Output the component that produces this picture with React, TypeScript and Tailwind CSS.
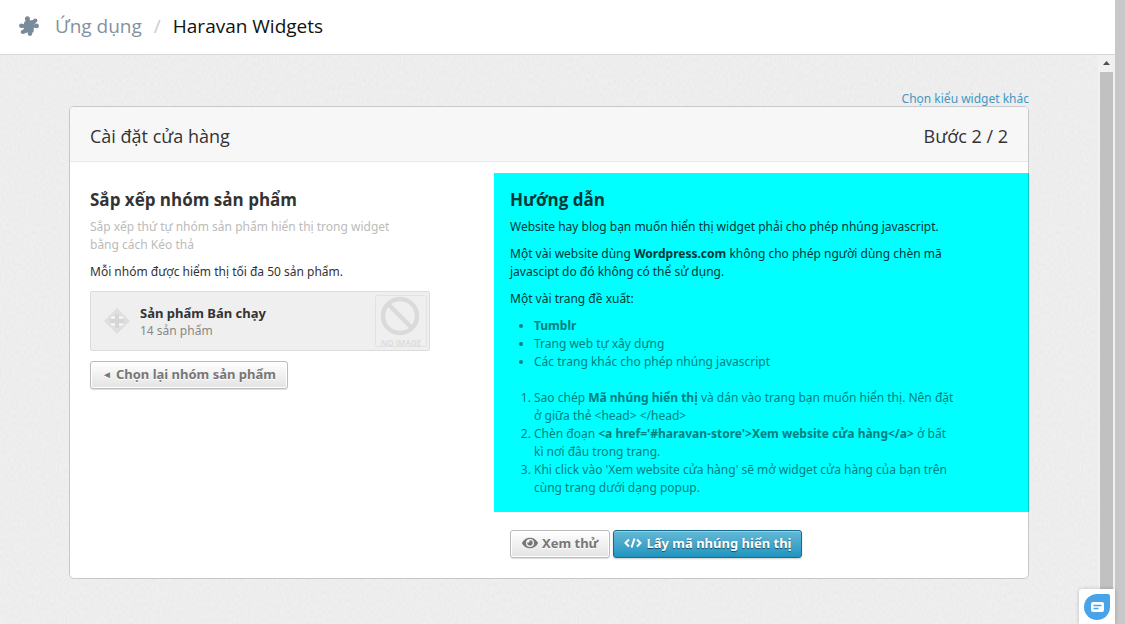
import type { ReactNode } from 'react';
import { FaEye } from 'react-icons/fa';

const SITES = ['Trang web tự xây dựng', 'Các trang khác cho phép nhúng javascript'];

function PuzzleIcon() {
  return (
    <svg viewBox="0 0 20 20" className="size-5 shrink-0" fill="#788b9b" aria-hidden="true">
      <path d="M5.500 5.500L15 3.800l2 3L14.800 9v4l1.200 2.500-3.500 1.500-3-.8L5 17.500l-2.500-2L5 12.500 4.600 9z" />
      <circle cx="8.400" cy="2.800" r="2.500" />
      <path d="M6.800 4h4.200v3H6.500z" />
      <circle cx="16.300" cy="4.600" r="2.100" />
      <circle cx="17.600" cy="9.900" r="2.300" />
      <path d="M13 8.500h4.500v3.200H13z" />
      <circle cx="11" cy="17.600" r="2.300" />
      <circle cx="3.800" cy="16" r="2.100" />
      <circle cx="2.400" cy="9.700" r="2.300" />
      <path d="M2.500 8.200H6v3.600H3z" />
      <circle cx="16" cy="14.800" r="1.600" fill="#fff" />
    </svg>
  );
}

function MoveIcon() {
  return (
    <svg viewBox="0 0 26 26" className="size-[26px] shrink-0" aria-hidden="true">
      <path d="M13 0l13 13-13 13L0 13z" fill="#dfdfdf" />
      <path d="M7 8.500h4v2H7zM15 8.500h4v2h-4zM7 15.500h4v2H7zM15 15.500h4v2h-4z" fill="#fafafa" />
      <path d="M11 6h4v14h-4zM6 11h14v4H6z" fill="#d6d6d6" />
    </svg>
  );
}

function NoImage() {
  return (
    <svg viewBox="0 0 52 52" className="size-[52px]" fontFamily="Open Sans, sans-serif" role="img" aria-label="No image">
      <rect x="0.5" y="0.5" width="51" height="51" rx="2" fill="#efefef" stroke="#e2e2e2" />
      <circle cx="25" cy="21" r="17" fill="none" stroke="#dadada" strokeWidth="4.500" />
      <path d="M13 9l24 24" stroke="#dadada" strokeWidth="4.500" />
      <text x="26" y="51" fontSize="8" fontWeight="600" fill="#dadada" textAnchor="middle">
        NO IMAGE
      </text>
    </svg>
  );
}

// Fine paper grain behind the card
function PaperTexture() {
  return (
    <svg className="pointer-events-none absolute inset-0 h-full w-full opacity-10" aria-hidden="true">
      <filter id="paper">
        <feTurbulence type="fractalNoise" baseFrequency="0.5 0.25" numOctaves="2" />
        <feColorMatrix type="matrix" values="0 0 0 0 0.5  0 0 0 0 0.5  0 0 0 0 0.5  2 0 0 0 -0.7" />
      </filter>
      <rect width="100%" height="100%" filter="url(#paper)" />
    </svg>
  );
}

function Button({ primary, children }: { primary?: boolean; children: ReactNode }) {
  const tone = primary
    ? 'border-[#146d8c] bg-linear-to-b from-[#63b8d6] to-[#1b95c0] text-white shadow-[inset_0_1px_0_#8fd0e6,0_1px_2px_#0003] text-shadow-[0_1px_1px_#0008] px-[10px]'
    : 'border-[#bbb] bg-linear-to-b from-white to-[#e3e3e3] text-[#777] shadow-[inset_0_0_0_1px_#fff,0_1px_1px_#0002] text-shadow-[0_1px_0_#fff] px-[11px]';
  return (
    <button type="button" className={`flex h-7 items-center gap-1 rounded-[3px] border pb-[2px] text-[13px] font-bold whitespace-nowrap ${tone}`}>
      {children}
    </button>
  );
}

function Guide() {
  return (
    <section className="mt-[11px] -mr-px border-r border-[#00cbcb] bg-[#00ffff] px-4 pt-[13px] pb-[15px] text-[#003838]">
      <h2 className="mb-1 font-['Open_Sans',sans-serif] text-[17px] leading-7 font-bold">Hướng dẫn</h2>
      <div className="max-w-[446px] space-y-[9px]">
        <p>Website hay blog bạn muốn hiển thị widget phải cho phép nhúng javascript.</p>
        <p>
          Một vài website dùng <strong>Wordpress.com</strong> không cho phép người dùng chèn mã javascipt do đó không có thể sử dụng.
        </p>
        <p>Một vài trang đề xuất:</p>
        <ul className="list-disc pl-6 text-[#008080]">
          <li>
            <strong>Tumblr</strong>
          </li>
          {SITES.map((site) => (
            <li key={site}>{site}</li>
          ))}
        </ul>
        <ol className="list-decimal pt-[9px] pl-6 text-[#008080]">
          <li>
            Sao chép <strong>Mã nhúng hiển thị</strong> và dán vào trang bạn muốn hiển thị. Nên đặt ở giữa thẻ &lt;head&gt; &lt;/head&gt;
          </li>
          <li>
            Chèn đoạn <strong>&lt;a href='#haravan-store'&gt;Xem website cửa hàng&lt;/a&gt;</strong> ở bất kì nơi đâu trong trang.
          </li>
          <li>Khi click vào 'Xem website cửa hàng' sẽ mở widget cửa hàng của bạn trên cùng trang dưới dạng popup.</li>
        </ol>
      </div>
    </section>
  );
}

export default function App() {
  return (
    <div className="flex min-h-screen bg-[#c8c8c8] pr-[10px] font-['Noto_Sans','Open_Sans',sans-serif] text-[12px] leading-[18px] text-[#333]">
      <div className="flex min-w-0 flex-1 flex-col">
        <header className="flex h-[55px] items-center border-b border-[#d8d8d8] bg-white pb-[3px] pl-[19px] font-['Open_Sans',sans-serif] text-[19px]">
          <PuzzleIcon />
          <nav className="ml-4 flex items-center gap-3 leading-7">
            <a href="#apps" className="text-[#8391a0]">Ứng dụng</a>
            <span className="text-[#ccc]">/</span>
            <span className="text-[#111]">Haravan Widgets</span>
          </nav>
        </header>

        <div className="flex flex-1">
          <main className="relative min-w-0 flex-1 bg-[#efefef] pt-[33px] pb-[45px]">
            <PaperTexture />
            <div className="relative mx-auto max-w-[960px]">
              <div className="flex h-[18px] justify-end pt-[2px]">
                <a href="#widgets" className="text-[#4298c4]">Chọn kiểu widget khác</a>
              </div>
              <div className="rounded-[5px] border border-[#c8c8c8] bg-white">
                <div className="flex items-center justify-between rounded-t-[4px] border-b border-[#e8e8e8] bg-[#f7f7f7] px-5 pt-[15px] pb-[11px] font-['Open_Sans',sans-serif] text-[18px] leading-7">
                  <h1>Cài đặt cửa hàng</h1>
                  <span>Bước 2 / 2</span>
                </div>

                <div className="flex">
                  <section className="w-[424px] shrink-0 px-5 pt-6">
                    <h2 className="mb-1 font-['Open_Sans',sans-serif] text-[17px] leading-7 font-bold">Sắp xếp nhóm sản phẩm</h2>
                    <div className="w-[340px]">
                      <p className="pr-4 text-[#bbb]">Sắp xếp thứ tự nhóm sản phẩm hiển thị trong widget bằng cách Kéo thả</p>
                      <p className="mt-[9px]">Mỗi nhóm được hiểm thị tối đa 50 sản phẩm.</p>
                      <div className="my-[10px] flex h-[60px] cursor-move items-center rounded-[2px] border border-[#dcdcdc] bg-[#efefef] pr-[2px] pl-[13px]">
                        <MoveIcon />
                        <div className="ml-[10px] flex-1 pt-px">
                          <h3 className="text-[13px] font-bold">Sản phẩm Bán chạy</h3>
                          <p className="text-[#888]">14 sản phẩm</p>
                        </div>
                        <NoImage />
                      </div>
                      <div className="flex">
                        <Button>
                          <span className="text-[10px]">◄</span> Chọn lại nhóm sản phẩm
                        </Button>
                      </div>
                    </div>
                  </section>

                  <div className="min-w-0 flex-1 pb-5">
                    <Guide />
                    <div className="mt-[18px] flex gap-[3px] pl-4">
                      <Button>
                        <FaEye className="size-4" /> Xem thử
                      </Button>
                      <Button primary>
                        <svg viewBox="0 0 18 12" className="h-3 w-[18px]" fill="none" stroke="currentColor" strokeWidth="2" aria-hidden="true">
                          <path d="M5 2.500L1.500 6 5 9.500M13 2.500L16.500 6 13 9.500M10.500 1.500l-3 9" />
                        </svg>
                        Lấy mã nhúng hiển thị
                      </Button>
                    </div>
                  </div>
                </div>
              </div>
            </div>
          </main>

          <div className="flex w-[17px] shrink-0 flex-col items-center bg-[#f1f1f1]" aria-hidden="true">
            <svg viewBox="0 0 17 17" className="size-[17px]" fill="#505050">
              <path d="M5 10l3.500-4L12 10z" />
            </svg>
            <div className="w-[13px] flex-1 bg-[#c1c1c1]" />
          </div>
        </div>
      </div>

      <button type="button" aria-label="Chat" className="fixed right-[10px] bottom-0 flex h-[35px] w-9 items-center justify-center rounded-tl-[3px] bg-white shadow-[0_0_4px_#0003]">
        <svg viewBox="0 0 26 26" className="size-[26px]">
          <path d="M13 0h11a2 2 0 0 1 2 2v11A13 13 0 1 1 13 0z" fill="#48a3e8" />
          <rect x="7" y="8" width="13" height="10" rx="2" fill="#fff" />
          <path d="M9.500 11.500h8M9.500 14.500h5" stroke="#48a3e8" strokeWidth="1.500" />
        </svg>
      </button>
    </div>
  );
}
